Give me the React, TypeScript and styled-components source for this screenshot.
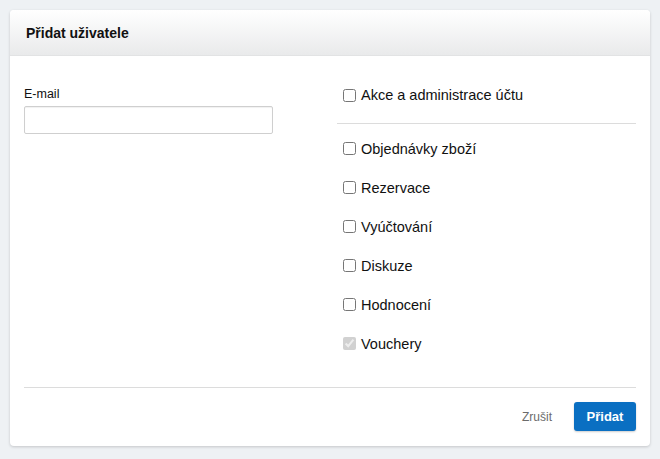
import styled, { createGlobalStyle } from "styled-components";

const GlobalStyle = createGlobalStyle`
  html, body {
    margin: 0;
    padding: 0;
    background: #eef1f4;
    font-family: "Liberation Sans", Arial, sans-serif;
    color: #111;
  }
`;

const Page = styled.div`
  padding: 10px;
  width: 660px;
  height: 459px;
  box-sizing: border-box;
`;

const Card = styled.div`
  width: 640px;
  background: #fff;
  border-radius: 4px;
  box-shadow: 0 1px 3px rgba(0, 0, 0, 0.18);
  overflow: hidden;
`;

const Header = styled.div`
  height: 46px;
  display: flex;
  align-items: center;
  padding: 0 16px;
  background: linear-gradient(#ffffff, #e9eaeb);
  border-bottom: 1px solid #e2e3e4;
  box-sizing: border-box;
`;

const Title = styled.h2`
  margin: 0;
  font-size: 14px;
  font-weight: 700;
  color: #111;
`;

const Body = styled.div`
  display: grid;
  grid-template-columns: 1fr 1fr;
  column-gap: 14px;
  padding: 24px 14px 0;
`;

const Field = styled.div`
  display: flex;
  flex-direction: column;
  padding-top: 7px;
`;

const Label = styled.label`
  font-size: 12.5px;
  line-height: 15px;
  color: #111;
  margin-bottom: 4px;
`;

const Input = styled.input`
  width: 249px;
  height: 28px;
  box-sizing: border-box;
  border: 1px solid #cfcfcf;
  border-radius: 2px;
  box-shadow: inset 0 1px 1px rgba(0, 0, 0, 0.06);
  outline: none;
  font-size: 13px;
  padding: 0 6px;
`;

const Column = styled.div`
  display: flex;
  flex-direction: column;
`;

const Row = styled.label<{ $h: number }>`
  display: flex;
  align-items: center;
  height: ${(p) => p.$h}px;
  padding-left: 5px;
  font-size: 14.5px;
  color: #111;
`;

const Check = styled.input`
  width: 13px;
  height: 13px;
  margin: 0 5px 0 1px;
  accent-color: #0a6fc2;
`;

const Divider = styled.hr<{ $top: number; $bottom: number }>`
  border: none;
  border-top: 1px solid #dcdcdc;
  margin: ${(p) => p.$top}px 0 ${(p) => p.$bottom}px;
`;

const Footer = styled.div`
  padding: 24px 14px 0;
`;

const Actions = styled.div`
  display: flex;
  justify-content: flex-end;
  align-items: center;
  gap: 22px;
  padding: 14px 0 15px;
`;

const CancelButton = styled.button`
  border: none;
  background: none;
  padding: 0;
  font-family: inherit;
  font-size: 12px;
  color: #6b6b6b;
  cursor: pointer;
`;

const PrimaryButton = styled.button`
  width: 62px;
  height: 29px;
  border: none;
  border-radius: 3px;
  background: #0a6fc2;
  color: #fff;
  font-family: inherit;
  font-weight: 700;
  font-size: 13px;
  box-shadow: 0 1px 2px rgba(0, 0, 0, 0.2);
  cursor: pointer;
`;

const groups = [
  "Objednávky zboží",
  "Rezervace",
  "Vyúčtování",
  "Diskuze",
  "Hodnocení",
];

const App = () => {
  return (
    <Page>
      <GlobalStyle />
      <Card>
        <Header>
          <Title>Přidat uživatele</Title>
        </Header>
        <Body>
          <Field>
            <Label>E-mail</Label>
            <Input type="text" />
          </Field>
          <Column>
            <Row $h={30}>
              <Check type="checkbox" />
              Akce a administrace účtu
            </Row>
            <Divider $top={13} $bottom={5} />
            {groups.map((g) => (
              <Row $h={39} key={g}>
                <Check type="checkbox" />
                {g}
              </Row>
            ))}
            <Row $h={39}>
              <Check type="checkbox" checked disabled readOnly />
              Vouchery
            </Row>
          </Column>
        </Body>
        <Footer>
          <Divider $top={0} $bottom={0} />
          <Actions>
            <CancelButton>Zrušit</CancelButton>
            <PrimaryButton>Přidat</PrimaryButton>
          </Actions>
        </Footer>
      </Card>
    </Page>
  );
};

export default App;
